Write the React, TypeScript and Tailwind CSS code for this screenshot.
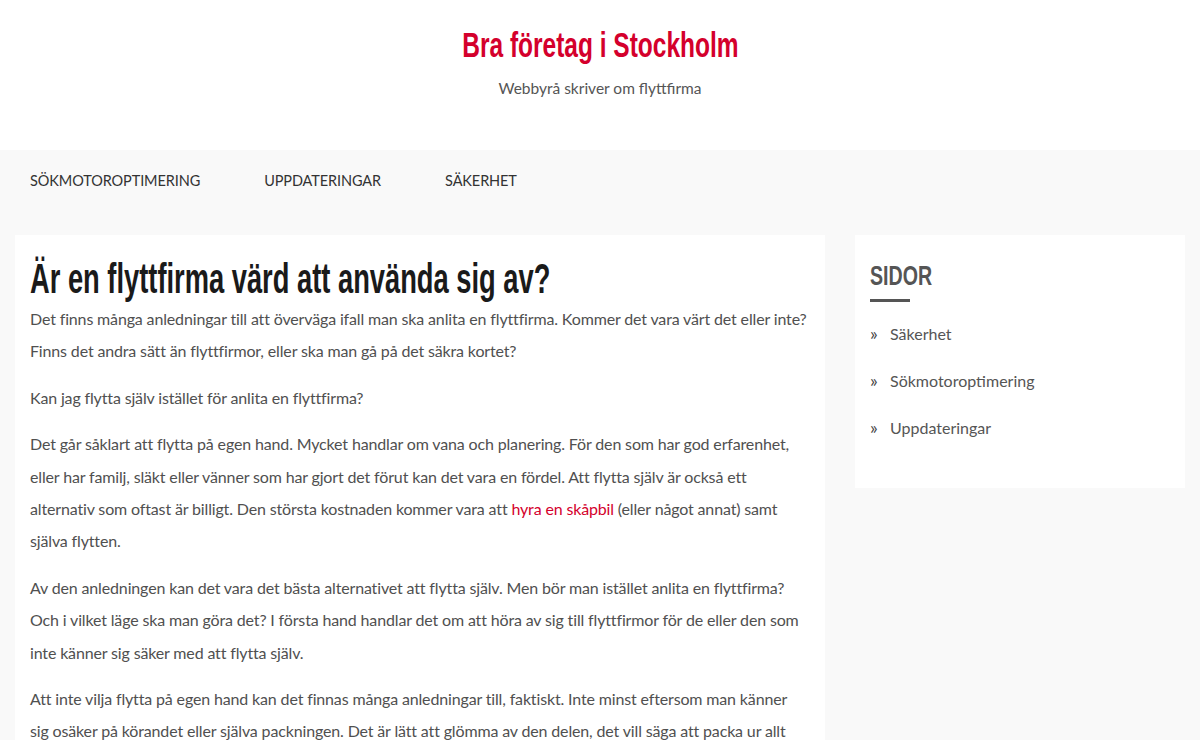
import React from "react"

const heading = '"Liberation Sans", Arial, sans-serif'
const body = 'Lato, "Noto Sans", sans-serif'

const paragraphs: React.ReactNode[] = [
  "Det finns många anledningar till att överväga ifall man ska anlita en flyttfirma. Kommer det vara värt det eller inte? Finns det andra sätt än flyttfirmor, eller ska man gå på det säkra kortet?",
  "Kan jag flytta själv istället för anlita en flyttfirma?",
  <>
    Det går såklart att flytta på egen hand. Mycket handlar om vana och planering. För den som har god erfarenhet, eller har familj, släkt eller vänner som har gjort det förut kan det vara en fördel. Att flytta själv är också ett alternativ som oftast är billigt. Den största kostnaden kommer vara att{" "}
    <a href="#" className="text-[#d4002c]">hyra en skåpbil</a> (eller något annat) samt själva flytten.
  </>,
  "Av den anledningen kan det vara det bästa alternativet att flytta själv. Men bör man istället anlita en flyttfirma? Och i vilket läge ska man göra det? I första hand handlar det om att höra av sig till flyttfirmor för de eller den som inte känner sig säker med att flytta själv.",
  "Att inte vilja flytta på egen hand kan det finnas många anledningar till, faktiskt. Inte minst eftersom man känner sig osäker på körandet eller själva packningen. Det är lätt att glömma av den delen, det vill säga att packa ur allt och sedan få allt på plats igen.",
]

const pages = ["Säkerhet", "Sökmotoroptimering", "Uppdateringar"]

export default function App() {
  return (
    <div className="h-[740px] overflow-hidden bg-[#f9f9f9]" style={{ fontFamily: body }}>
      <header className="h-[150px] bg-white flex flex-col items-center pt-[23px]">
        <h1
          className="inline-block whitespace-nowrap text-[35px] leading-[44px] font-bold text-[#d4002c] scale-x-[0.70] origin-center"
          style={{ fontFamily: heading }}
        >
          Bra företag i Stockholm
        </h1>
        <p className="mt-[10px] text-[15.5px] text-[#555]">Webbyrå skriver om flyttfirma</p>
      </header>

      <nav className="h-[62px] flex items-center gap-[64px] px-[30px] text-[14.5px] tracking-[-0.1px] text-[#333] uppercase">
        <a href="#">Sökmotoroptimering</a>
        <a href="#">Uppdateringar</a>
        <a href="#">Säkerhet</a>
      </nav>

      <div className="flex items-start gap-[30px] px-[15px] pt-[23px]">
        <main className="w-[810px] bg-white pl-[15px] pr-[17px] pt-[20px] pb-[20px]">
          <h2
            className="inline-block whitespace-nowrap text-[42px] leading-[48px] font-bold text-[#1a1a1a] scale-x-[0.65] origin-left"
            style={{ fontFamily: heading }}
          >
            Är en flyttfirma värd att använda sig av?
          </h2>
          {paragraphs.map((p, i) => (
            <p key={i} className="text-[16px] leading-[32.4px] tracking-[-0.15px] text-[#505050] mb-[14px]">
              {p}
            </p>
          ))}
        </main>

        <aside className="w-[330px] bg-white px-[15px] pt-[24px] pb-[37px]">
          <h3
            className="inline-block text-[28px] leading-[34px] font-bold text-[#555] uppercase scale-x-[0.70] origin-left"
            style={{ fontFamily: heading }}
          >
            Sidor
          </h3>
          <div className="mt-[6px] h-[3px] w-[40px] bg-[#555]" />
          <ul className="mt-[8px] flex flex-col">
            {pages.map((p) => (
              <li key={p} className="flex items-center h-[47px] text-[16px] text-[#555]">
                <span className="w-[20px] text-[18px] leading-none text-[#444] -mt-[2px]">»</span>
                <a href="#">{p}</a>
              </li>
            ))}
          </ul>
        </aside>
      </div>
    </div>
  )
}
